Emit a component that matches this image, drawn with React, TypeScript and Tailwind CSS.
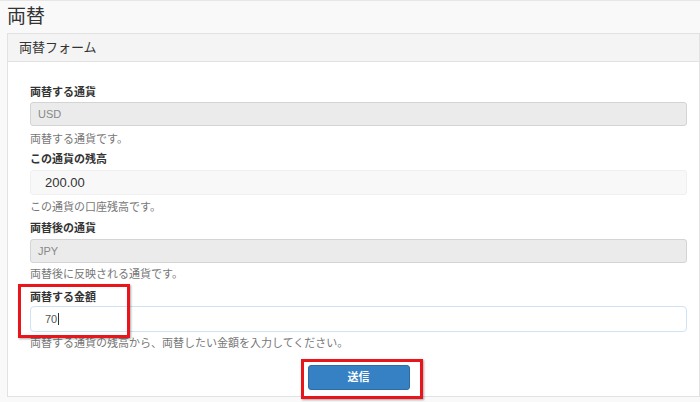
import React from "react";

const font = {
  fontFamily: '"Liberation Sans", "Noto Sans CJK JP", sans-serif',
};

function Label({ children, className = "" }: { children: React.ReactNode; className?: string }) {
  return (
    <div className={`h-4 text-[11px] leading-4 font-bold text-[#333] ${className}`}>{children}</div>
  );
}

function Help({ children, className = "" }: { children: React.ReactNode; className?: string }) {
  return <div className={`h-4 text-[11px] leading-4 text-[#777] ${className}`}>{children}</div>;
}

export default function App() {
  return (
    <div style={font} className="relative w-[700px] h-[402px] overflow-hidden bg-[#f9f9f9] border-t border-[#e6e6e6]">
      {/* page title */}
      <div className="h-[32px] pl-[7px] flex items-center text-[19px] text-[#333]">両替</div>

      {/* panel */}
      <div className="ml-[7px] w-[693px] h-[364px] bg-white border border-[#e2e2e2]">
        <div className="h-[28px] bg-[#f4f4f4] border-b border-[#e2e2e2] pl-[11px] flex items-center text-[13px] text-[#333]">
          両替フォーム
        </div>

        <div className="pt-[22px] pl-[22px] pr-[12px]">
          <Label className="mb-[2px]">両替する通貨</Label>
          <div className="h-[24px] rounded-[3px] bg-[#ebebeb] border border-[#d4d4d4] pl-[7px] flex items-center text-[11px] text-[#888]">
            USD
          </div>
          <Help className="mt-[5px]">両替する通貨です。</Help>

          <Label className="mt-[4px] mb-[3px]">この通貨の残高</Label>
          <div className="h-[25px] rounded-[3px] bg-[#f8f8f8] border border-[#f0f0f0] pl-[14px] flex items-center text-[13px] text-[#333]">
            200.00
          </div>
          <Help className="mt-[4px]">この通貨の口座残高です。</Help>

          <Label className="mt-[5px] mb-[3px]">両替後の通貨</Label>
          <div className="h-[24px] rounded-[3px] bg-[#ebebeb] border border-[#d4d4d4] pl-[7px] flex items-center text-[11px] text-[#888]">
            JPY
          </div>
          <Help className="mt-[3px]">両替後に反映される通貨です。</Help>

          <Label className="mt-[7px] mb-[1px]">両替する金額</Label>
          <div className="h-[26px] rounded-[4px] bg-white border border-[#cfe3f7] pl-[14px] flex items-center text-[11px] text-[#555]">
            70<span className="ml-[1px] inline-block w-px h-[12px] bg-[#333]" />
          </div>
          <Help className="mt-[3px]">両替する通貨の残高から、両替したい金額を入力してください。</Help>

          <div className="mt-[14px] flex justify-center">
            <button className="w-[102px] h-[25px] rounded-[3px] bg-[#3681c4] border border-[#2e6da4] text-white text-[11px] font-semibold">
              送信
            </button>
          </div>
        </div>
      </div>

      {/* annotation boxes */}
      <div className="absolute left-[18px] top-[283px] w-[112px] h-[54px] border-[3px] border-[#e8151b] shadow-[1px_1px_2px_rgba(0,0,0,0.35)]" />
      <div className="absolute left-[301px] top-[358px] w-[122px] h-[40px] border-[3px] border-[#e8151b] shadow-[1px_1px_2px_rgba(0,0,0,0.35)]" />
    </div>
  );
}
